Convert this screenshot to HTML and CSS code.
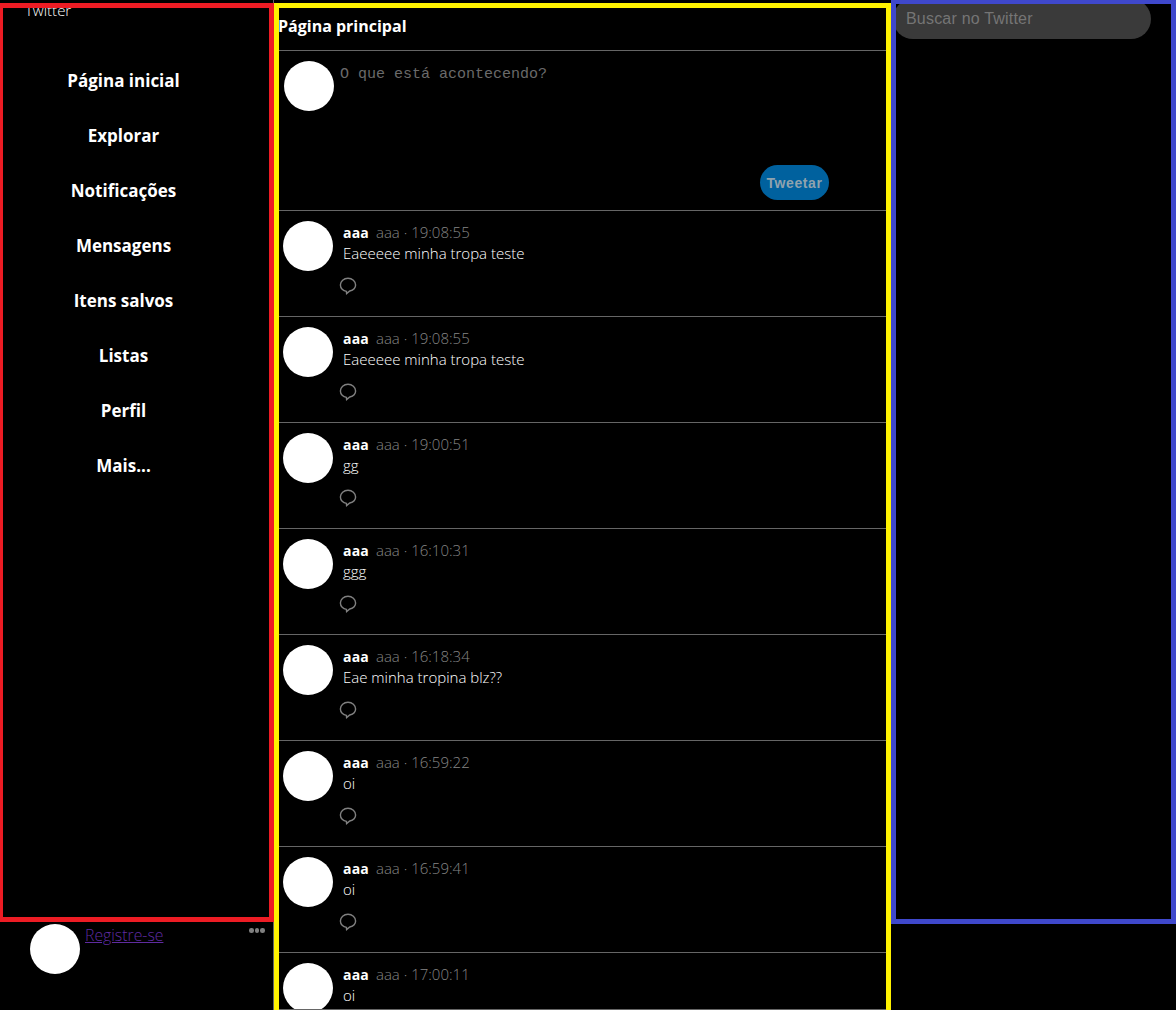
FILE: index.html
```html
<!DOCTYPE html>
<html lang="pt-BR">
<head>
<meta charset="utf-8">
<title>Twitter</title>
<link rel="stylesheet" href="styles.css">
</head>
<body>
<svg class="sprite" width="0" height="0" aria-hidden="true"><symbol id="reply" viewBox="0 0 18 18"><path d="M9 1.2C4.8 1.2 1.4 4.2 1.4 7.9c0 3.3 2.7 6 6 6.5l.2 2.2 3.2-2.6c3.2-.9 5.8-3 5.8-6.1C16.6 4.2 13.2 1.2 9 1.2z"/></symbol></svg>
<div class="page">
  <aside class="left">
    <div class="left-box">
      <div class="brand">Twitter</div>
      <nav class="nav">
        <a class="nav-item">Página inicial</a>
        <a class="nav-item">Explorar</a>
        <a class="nav-item">Notificações</a>
        <a class="nav-item">Mensagens</a>
        <a class="nav-item">Itens salvos</a>
        <a class="nav-item">Listas</a>
        <a class="nav-item">Perfil</a>
        <a class="nav-item">Mais...</a>
      </nav>
    </div>
    <div class="account">
      <div class="avatar"></div>
      <a class="register" href="#register">Registre-se</a>
      <div class="dots"><i></i><i></i><i></i></div>
    </div>
  </aside>
  <main class="center">
    <div class="timeline">
      <h1 class="title">Página principal</h1>
      <form class="composer">
        <div class="avatar"></div>
        <div class="composer-text">O que está acontecendo?</div>
        <button class="tweet-btn" type="button">Tweetar</button>
      </form>
      <article class="tweet">
        <div class="avatar"></div>
        <div class="tweet-body">
          <div class="meta"><b class="name">aaa</b><span class="handle">aaa · 19:08:55</span></div>
          <p class="text">Eaeeeee minha tropa teste</p>
          <svg class="reply"><use href="#reply"/></svg>
        </div>
      </article>
      <article class="tweet">
        <div class="avatar"></div>
        <div class="tweet-body">
          <div class="meta"><b class="name">aaa</b><span class="handle">aaa · 19:08:55</span></div>
          <p class="text">Eaeeeee minha tropa teste</p>
          <svg class="reply"><use href="#reply"/></svg>
        </div>
      </article>
      <article class="tweet">
        <div class="avatar"></div>
        <div class="tweet-body">
          <div class="meta"><b class="name">aaa</b><span class="handle">aaa · 19:00:51</span></div>
          <p class="text">gg</p>
          <svg class="reply"><use href="#reply"/></svg>
        </div>
      </article>
      <article class="tweet">
        <div class="avatar"></div>
        <div class="tweet-body">
          <div class="meta"><b class="name">aaa</b><span class="handle">aaa · 16:10:31</span></div>
          <p class="text">ggg</p>
          <svg class="reply"><use href="#reply"/></svg>
        </div>
      </article>
      <article class="tweet">
        <div class="avatar"></div>
        <div class="tweet-body">
          <div class="meta"><b class="name">aaa</b><span class="handle">aaa · 16:18:34</span></div>
          <p class="text">Eae minha tropina blz??</p>
          <svg class="reply"><use href="#reply"/></svg>
        </div>
      </article>
      <article class="tweet">
        <div class="avatar"></div>
        <div class="tweet-body">
          <div class="meta"><b class="name">aaa</b><span class="handle">aaa · 16:59:22</span></div>
          <p class="text">oi</p>
          <svg class="reply"><use href="#reply"/></svg>
        </div>
      </article>
      <article class="tweet">
        <div class="avatar"></div>
        <div class="tweet-body">
          <div class="meta"><b class="name">aaa</b><span class="handle">aaa · 16:59:41</span></div>
          <p class="text">oi</p>
          <svg class="reply"><use href="#reply"/></svg>
        </div>
      </article>
      <article class="tweet">
        <div class="avatar"></div>
        <div class="tweet-body">
          <div class="meta"><b class="name">aaa</b><span class="handle">aaa · 17:00:11</span></div>
          <p class="text">oi</p>
          <svg class="reply"><use href="#reply"/></svg>
        </div>
      </article>
    </div>
  </main>
  <aside class="right">
    <div class="search">Buscar no Twitter</div>
  </aside>
</div>
</body>
</html>
```
FILE: styles.css
```css
* { box-sizing: border-box; }
html { height: 100%; background: #000; overflow: hidden; }
body { margin: 0; height: 100%; color: #fff; font-family: "Open Sans", "Noto Sans", sans-serif; }
.sprite { position: absolute; }

.page { display: grid; grid-template-columns: 274px 617px 285px; height: 1010px; overflow: hidden; }

.avatar { width: 50px; height: 50px; border-radius: 50%; background: #fff; flex: none; }

/* Left column */
.left { border-right: 1px solid #666; height: 1010px; }
.left-box {
  height: 919px; margin: 3px -1px 0 0;
  border: 5px solid #ed1c24; border-left-width: 3px;
  display: flex; flex-direction: column;
}
.brand {
  position: relative; z-index: -1;
  margin: -7px 0 0 22px;
  font-size: 15px; line-height: 19px; font-weight: 300;
}
.nav { display: flex; flex-direction: column; margin-top: 33px; padding-right: 25px; }
.nav-item {
  height: 55px; line-height: 55px; text-align: center;
  font-size: 17px; font-weight: 700; color: #fff;
}
.account { display: flex; padding-left: 30px; margin-top: 2px; height: 86px; }
.register {
  margin: 1px 0 0 5px; height: 20px;
  font-size: 15.8px; line-height: 20px; font-weight: 300; color: #5f2ba0;
}
.dots { display: flex; gap: 1px; margin: 4px 0 0 86px; height: 5px; }
.dots i { width: 4.5px; height: 4.5px; border-radius: 50%; background: #808080; }

/* Centre column */
.center { border: 5px solid #fff200; border-bottom: 0; margin-top: 3px; height: 1007px; }
.timeline { height: 1002px; display: flex; flex-direction: column; overflow: hidden; border-bottom: 1px solid #666; }
.title {
  flex: none; height: 43px; margin: 0 0 0 -1px;
  border-bottom: 1px solid #666;
  font-size: 16px; line-height: 37px; font-weight: 700;
}
.composer {
  flex: none; height: 160px; border-bottom: 1px solid #666;
  display: flex; flex-wrap: wrap; align-content: flex-start; padding: 10px 0 0 5px;
}
.composer-text {
  margin: 5px 0 0 6px; width: 500px;
  font-family: "Liberation Mono", monospace; font-size: 15px; line-height: 18px; color: #6a6a6a;
}
.tweet-btn {
  width: 69px; height: 35px; margin: 54px 0 0 476px; padding: 0;
  border: 0; border-radius: 18px; background: #00619e; color: #8fa3ae;
  font-family: "Liberation Sans", sans-serif; font-size: 14px; font-weight: 700; letter-spacing: .6px;
}
.tweet {
  flex: none; height: 106px; border-bottom: 1px solid #666;
  display: flex; padding: 10px 0 0 4px;
}
.tweet-body { margin-left: 10px; min-width: 0; }
.meta { display: flex; gap: 7px; height: 24px; line-height: 24px; }
.name { font-size: 14px; font-weight: 700; letter-spacing: .2px; }
.handle { font-size: 15px; font-weight: 300; color: #858585; margin-top: -1px; }
.text { margin: -2px 0 0; font-size: 15px; line-height: 20px; font-weight: 300; color: #fff; }
.reply { display: block; width: 18px; height: 18px; margin: 14px 0 0 -4px; fill: none; stroke: #808080; stroke-width: 1.4; }

/* Right column */
.right { border: 5px solid #3f48cc; border-top-width: 4px; height: 924px; }
.search {
  position: relative; z-index: -1;
  width: 258px; height: 40px; margin: -5px 0 0 -3px; padding: 6px 0 0 13px;
  border-radius: 20px; background: #3a3a3a; color: #757575;
  font-family: "Liberation Sans", sans-serif; font-size: 16px; line-height: 28px; letter-spacing: .2px;
}
```
